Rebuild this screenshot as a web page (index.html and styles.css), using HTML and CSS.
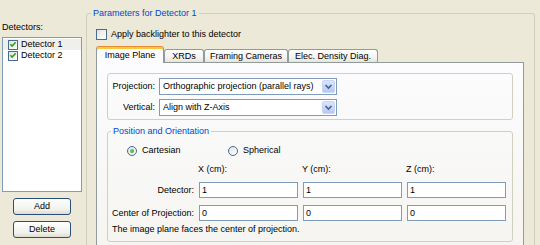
FILE: index.html
```html
<!DOCTYPE html>
<html lang="en">
<head>
  <meta charset="UTF-8">
  <meta name="viewport" content="width=device-width, initial-scale=1.0">
  <title>Detectors</title>
  <link rel="stylesheet" href="styles.css">
</head>
<body>

  <div class="side">
    <div class="side-label">Detectors:</div>
    <ul class="det-list">
      <li class="det sel">
        <span class="chk"><svg width="9" height="9" viewBox="0 0 9 9"><path d="M1.5 4.2 L3.5 6.3 L7.5 2" fill="none" stroke="#21a121" stroke-width="1.7"/></svg></span>
        Detector 1
      </li>
      <li class="det">
        <span class="chk"><svg width="9" height="9" viewBox="0 0 9 9"><path d="M1.5 4.2 L3.5 6.3 L7.5 2" fill="none" stroke="#21a121" stroke-width="1.7"/></svg></span>
        Detector 2
      </li>
    </ul>
    <button class="btn">Add</button>
    <button class="btn">Delete</button>
  </div>

  <fieldset class="params">
    <legend>Parameters for Detector 1</legend>

    <label class="backlight"><span class="chk big"></span>Apply backlighter to this detector</label>

    <div class="tabs">
      <div class="tab active">Image Plane</div>
      <div class="tab">XRDs</div>
      <div class="tab">Framing Cameras</div>
      <div class="tab">Elec. Density Diag.</div>
    </div>

    <div class="page">
      <div class="proj">
        <span class="lbl">Projection:</span>
        <div class="combo">
          <span class="combo-text">Orthographic projection (parallel rays)</span>
          <span class="drop"><svg width="11" height="13" viewBox="0 0 11 13"><path d="M2.5 5 L5.5 8 L8.5 5" fill="none" stroke="#4d6185" stroke-width="1.6"/></svg></span>
        </div>
        <span class="lbl">Vertical:</span>
        <div class="combo">
          <span class="combo-text">Align with Z-Axis</span>
          <span class="drop"><svg width="11" height="13" viewBox="0 0 11 13"><path d="M2.5 5 L5.5 8 L8.5 5" fill="none" stroke="#4d6185" stroke-width="1.6"/></svg></span>
        </div>
      </div>

      <fieldset class="pos">
        <legend>Position and Orientation</legend>
        <div class="radios">
          <span class="radio-item"><span class="radio on"></span>Cartesian</span>
          <span class="radio-item"><span class="radio"></span>Spherical</span>
        </div>

        <div class="coords">
          <span></span>
          <span class="colhead">X (cm):</span>
          <span class="colhead">Y (cm):</span>
          <span class="colhead">Z (cm):</span>

          <span class="lbl">Detector:</span>
          <input class="field" type="text" value="1">
          <input class="field" type="text" value="1">
          <input class="field" type="text" value="1">

          <span class="lbl">Center of Projection:</span>
          <input class="field" type="text" value="0">
          <input class="field" type="text" value="0">
          <input class="field" type="text" value="0">
        </div>

        <p class="note">The image plane faces the center of projection.</p>
      </fieldset>
    </div>
  </fieldset>

</body>
</html>
```

FILE: styles.css
```css
body {
  margin: 0;
  height: 245px;
  overflow: hidden;
  display: flex;
  background: #ece9d8;
  font-family: "Liberation Sans", Arial, sans-serif;
  font-size: 9px;
  line-height: 11px;
  color: #000;
}

/* left column */
.side {
  flex: none;
  width: 84px;
  padding: 22px 0 0 2px;
}

.side-label {
  height: 11px;
}

.det-list {
  list-style: none;
  margin: 4px 0 0;
  padding: 1px 0;
  width: 80px;
  height: 155px;
  box-sizing: border-box;
  background: #fff;
  border: 1px solid #7f9db9;
}

.det {
  display: flex;
  align-items: center;
  gap: 3px;
  height: 11px;
  padding-left: 5px;
}

.det.sel {
  background: #efefec;
}

.chk {
  flex: none;
  display: flex;
  align-items: center;
  justify-content: center;
  width: 10px;
  height: 10px;
  box-sizing: border-box;
  border: 1px solid #4a6a8f;
  background: linear-gradient(135deg, #e2e2dc, #fff);
}

.chk.big {
  width: 11px;
  height: 11px;
}

.btn {
  display: block;
  width: 58px;
  height: 17px;
  margin: 6px 0 0 11px;
  padding: 0;
  font: inherit;
  color: #000;
  border: 1px solid #2a4f7a;
  border-radius: 3px;
  background: linear-gradient(#fefefe, #f2f2ec 70%, #dedbd0);
}

/* parameters group, cut off by the window bottom */
.params {
  flex: 1;
  min-width: 0;
  margin: 8px 5px 0 0;
  padding: 10px 10px 0 9px;
  height: 237px;
  box-sizing: border-box;
  overflow: hidden;
  border: 1px solid #d0d0bf;
  border-bottom: none;
  border-radius: 3px 3px 0 0;
}

legend {
  padding: 0 2px;
  color: #0046d5;
}

.params > legend {
  margin-left: -5px;
}

.backlight {
  display: flex;
  align-items: center;
  gap: 4px;
  height: 11px;
}

.tabs {
  display: flex;
  align-items: flex-end;
  height: 16px;
  margin-top: 6px;
}

.tab {
  height: 13px;
  box-sizing: border-box;
  padding-top: 1px;
  text-align: center;
  border: 1px solid #919b9c;
  border-bottom: none;
  border-radius: 3px 3px 0 0;
  background: linear-gradient(#fff, #f4f3ef 60%, #e6e4dc);
}

.tab:nth-child(2) { width: 40px; }
.tab:nth-child(3) { width: 84px; }
.tab:nth-child(4) { width: 90px; }

.tab.active {
  position: relative;
  z-index: 1;
  width: 68px;
  height: 17px;
  margin-bottom: -1px;
  padding-top: 3px;
  background: #fcfcfe;
  border-top: 1px solid #e68b2c;
  box-shadow: inset 0 2px #ffc73c;
}

.page {
  height: 200px;
  padding: 10px;
  border: 1px solid #919b9c;
  border-bottom: none;
  background: linear-gradient(#fcfcfe, #f4f3ee);
}

.proj {
  display: grid;
  grid-template-columns: 43px 178px;
  column-gap: 4px;
  row-gap: 4px;
  align-items: center;
  padding: 4px 0 3px 4px;
  border: 1px solid #d0d0bf;
  border-radius: 3px;
}

.lbl {
  text-align: right;
  white-space: nowrap;
}

.combo {
  display: flex;
  align-items: center;
  height: 17px;
  box-sizing: border-box;
  background: #fff;
  border: 1px solid #7f9db9;
}

.combo-text {
  flex: 1;
  padding-left: 3px;
}

.drop {
  display: flex;
  align-self: stretch;
  align-items: center;
  justify-content: center;
  width: 11px;
  margin: 1px;
  border: 1px solid #c6d5f8;
  border-radius: 2px;
  background: linear-gradient(#d9e5fd, #b6c9f4);
}

.pos {
  margin: 6px 0 0;
  padding: 8px 4px 6px;
  border: 1px solid #d0d0bf;
  border-radius: 3px;
  min-width: 0;
}

.pos > legend {
  margin-left: -1px;
}

.radios {
  display: flex;
  height: 11px;
  padding-left: 15px;
}

.radio-item {
  display: flex;
  align-items: center;
  gap: 5px;
  width: 101px;
}

.radio {
  flex: none;
  display: flex;
  align-items: center;
  justify-content: center;
  width: 10px;
  height: 10px;
  box-sizing: border-box;
  border: 1px solid #4a6a8f;
  border-radius: 50%;
  background: linear-gradient(135deg, #e2e2dc, #fff);
}

.radio.on::after {
  content: "";
  width: 4px;
  height: 4px;
  border-radius: 50%;
  background: radial-gradient(circle at 35% 35%, #6ed36e, #21a121);
}

.coords {
  display: grid;
  grid-template-columns: 82px repeat(3, 99px);
  grid-template-rows: 11px 16px 16px;
  column-gap: 5px;
  row-gap: 7px;
  align-items: center;
  margin-top: 8px;
}

.colhead {
  margin-left: -1px;
}

.field {
  height: 16px;
  width: 100%;
  box-sizing: border-box;
  margin: 0;
  padding: 0 2px;
  font: inherit;
  color: #000;
  background: #fff;
  border: 1px solid #7f9db9;
  outline: none;
}

.note {
  margin: 3px 0 0;
}
```
